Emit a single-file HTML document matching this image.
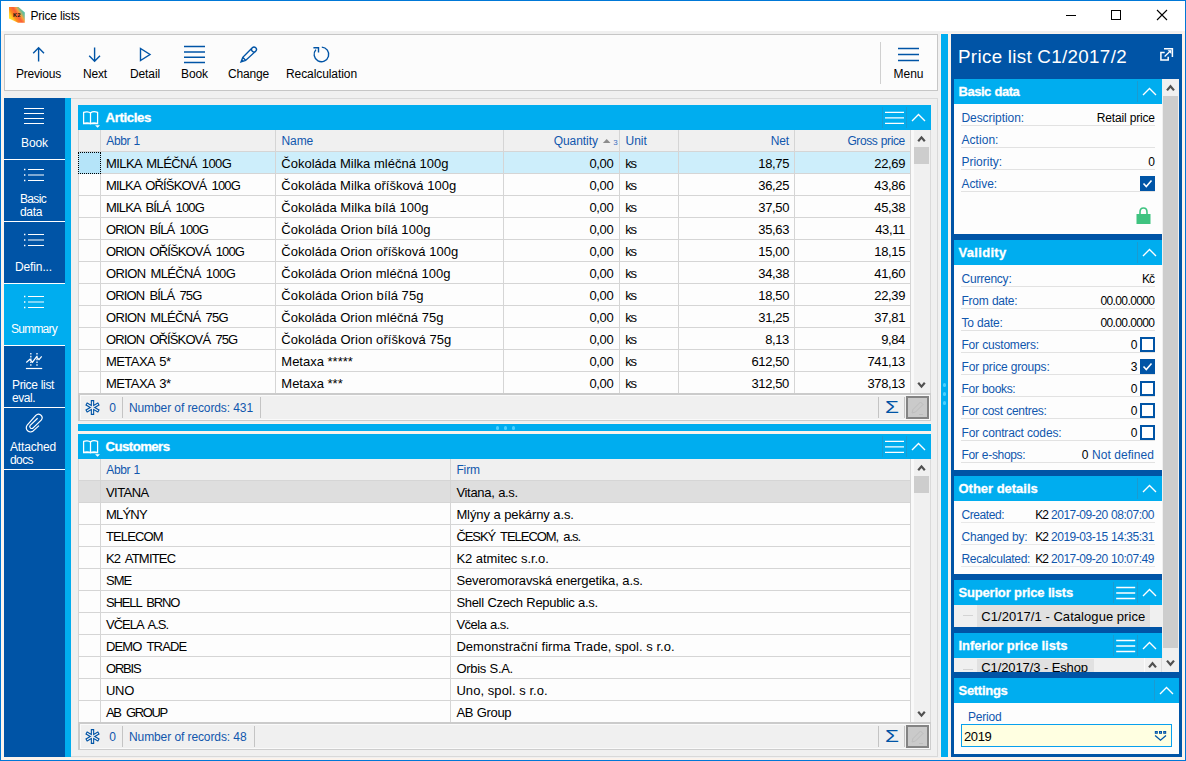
<!DOCTYPE html>
<html lang="en"><head><meta charset="utf-8"><title>Price lists</title>
<style>html,body{margin:0;padding:0}body{width:1186px;height:761px;position:relative;overflow:hidden;font-family:"Liberation Sans",sans-serif;background:#f0f0f0}
.r{position:absolute}.t{position:absolute;white-space:pre}</style></head>
<body>
<div class="r" style="left:0px;top:0px;width:1186px;height:761px;background:#0078d7;"></div>
<div class="r" style="left:1px;top:1px;width:1184px;height:30px;background:#fff;"></div>
<div class="r" style="left:1px;top:31px;width:1184px;height:729px;background:#fcf3ec;"></div>
<div class="r" style="left:4px;top:31px;width:936px;height:726px;background:#f0f0f0;"></div>
<div class="r" style="left:940px;top:31px;width:242px;height:2px;background:#f0f0f0;"></div>
<div class="r" style="left:71px;top:757px;width:869px;height:1px;background:#f0f0f0;"></div>
<svg class="r" style="left:8px;top:6px;" width="18" height="18" viewBox="0 0 18 18"><defs><linearGradient id="ig" gradientUnits="userSpaceOnUse" x1="1" y1="13" x2="17" y2="3"><stop offset="0" stop-color="#ffee2a"/><stop offset="0.16" stop-color="#ffd02a"/><stop offset="0.3" stop-color="#ff8a1c"/><stop offset="0.5" stop-color="#fb5d3a"/><stop offset="0.64" stop-color="#f8a23c"/><stop offset="0.76" stop-color="#7dbb8c"/><stop offset="0.88" stop-color="#4cc0aa"/><stop offset="1" stop-color="#3fa896"/></linearGradient></defs><path d="M1 1 H10.5 L16.8 6.5 V16.8 H10 L1 12.5 Z" fill="url(#ig)"/></svg>
<span class="t" style="left:13px;top:10.96px;font-size:5.6px;line-height:8px;color:#111;font-weight:700;letter-spacing:0.422px;">K2</span>
<span class="t" style="left:30.5px;top:6.84px;font-size:12px;line-height:18px;color:#000;font-weight:400;letter-spacing:-0.234px;word-spacing:0.234px;">Price lists</span>
<svg class="r" style="left:1060px;top:5px;" width="115" height="22" viewBox="0 0 115 22"><path d="M6 10.5H16" stroke="#000" stroke-width="1" fill="none"/><rect x="51.5" y="5.5" width="9" height="9" stroke="#000" fill="none"/><path d="M97 5L107 15M107 5L97 15" stroke="#000" stroke-width="1.1" fill="none"/></svg>
<div class="r" style="left:4px;top:34px;width:934px;height:57px;background:#fcfcfc;border:1px solid #c6c6c6;box-sizing:border-box;"></div>
<svg class="r" style="left:28px;top:44px;" width="22" height="20" viewBox="0 0 22 20"><path d="M10.6 17.5V4M5.2 9.3L10.6 3.8L16 9.3" stroke="#0054a6" stroke-width="1.4" fill="none"/></svg>
<span class="t" style="left:16px;top:64.84px;font-size:12px;line-height:18px;color:#000;font-weight:400;letter-spacing:-0.211px;">Previous</span>
<svg class="r" style="left:84px;top:44px;" width="22" height="20" viewBox="0 0 22 20"><path d="M10.6 3.5V17M5.2 11.7L10.6 17.2L16 11.7" stroke="#0054a6" stroke-width="1.4" fill="none"/></svg>
<span class="t" style="left:83px;top:64.84px;font-size:12px;line-height:18px;color:#000;font-weight:400;letter-spacing:-0.172px;">Next</span>
<svg class="r" style="left:134px;top:44px;" width="22" height="20" viewBox="0 0 22 20"><path d="M6.5 4.5V16.5L16 10.5Z" stroke="#0054a6" stroke-width="1.4" fill="none"/></svg>
<span class="t" style="left:130px;top:64.84px;font-size:12px;line-height:18px;color:#000;font-weight:400;letter-spacing:-0.115px;">Detail</span>
<svg class="r" style="left:182px;top:44px;" width="26" height="20" viewBox="0 0 26 20"><path d="M2 2.6H23M2 7.9H23M2 13.2H23M2 18.5H23" stroke="#0054a6" stroke-width="1.5" fill="none"/></svg>
<span class="t" style="left:181px;top:64.84px;font-size:12px;line-height:18px;color:#000;font-weight:400;letter-spacing:-0.090px;">Book</span>
<svg class="r" style="left:238px;top:44px;" width="22" height="20" viewBox="0 0 22 20"><path d="M3 17.9L4.8 13.3L14.3 3.8A2.4 2.4 0 0 1 17.7 7.2L7.6 16.4Z M4.8 13.3L7.6 16.4 M14.3 3.8A2.4 2.4 0 0 0 17.7 7.2" stroke="#0054a6" stroke-width="1.4" fill="none"/><path d="M3 17.9L4 15.2L5.8 17.1Z" fill="#0054a6"/></svg>
<span class="t" style="left:228px;top:64.84px;font-size:12px;line-height:18px;color:#000;font-weight:400;letter-spacing:-0.174px;">Change</span>
<svg class="r" style="left:310px;top:44px;" width="24" height="20" viewBox="0 0 24 20"><path d="M11.8 3.1A7.3 7.3 0 1 1 5.9 5.6 M3.4 3.7H8.5V8.6" stroke="#0054a6" stroke-width="1.4" fill="none"/></svg>
<span class="t" style="left:286px;top:64.84px;font-size:12px;line-height:18px;color:#000;font-weight:400;letter-spacing:-0.081px;">Recalculation</span>
<div class="r" style="left:880px;top:42px;width:1px;height:42px;background:#d0d0d0;"></div>
<svg class="r" style="left:894px;top:44px;" width="28" height="20" viewBox="0 0 28 20"><path d="M4 4.6H25M4 10.6H25M4 16.5H25" stroke="#0054a6" stroke-width="1.5" fill="none"/></svg>
<span class="t" style="left:893.4px;top:64.84px;font-size:12px;line-height:18px;color:#000;font-weight:400;letter-spacing:0.042px;">Menu</span>
<div class="r" style="left:4px;top:98px;width:61px;height:659px;background:#0054a6;"></div>
<div class="r" style="left:65px;top:98px;width:6px;height:659px;background:#00adef;"></div>
<div class="r" style="left:4px;top:284px;width:67px;height:61px;background:#00adef;"></div>
<div class="r" style="left:4px;top:159px;width:61px;height:1px;background:#fff;"></div>
<div class="r" style="left:4px;top:221px;width:61px;height:1px;background:#fff;"></div>
<div class="r" style="left:4px;top:283px;width:61px;height:1px;background:#fff;"></div>
<div class="r" style="left:4px;top:345px;width:61px;height:1px;background:#fff;"></div>
<div class="r" style="left:4px;top:407px;width:61px;height:1px;background:#fff;"></div>
<div class="r" style="left:4px;top:469px;width:61px;height:1px;background:#fff;"></div>
<svg class="r" style="left:22px;top:105px;" width="26" height="22" viewBox="0 0 26 22"><path d="M2 3.5H22M2 8.5H22M2 13.5H22M2 18.5H22" stroke="#fff" stroke-width="1.2" fill="none"/></svg>
<span class="t" style="left:21px;top:133.84px;font-size:12px;line-height:18px;color:#fff;font-weight:400;letter-spacing:-0.090px;">Book</span>
<svg class="r" style="left:22px;top:167px;" width="26" height="16" viewBox="0 0 26 16"><path d="M6 2.5H22M6 8H22M6 13.5H22" stroke="#fff" stroke-width="1.2" fill="none"/><path d="M2 2.5H3.4M2 8H3.4M2 13.5H3.4" stroke="#fff" stroke-width="1.4"/></svg>
<span class="t" style="left:20px;top:189.84px;font-size:12px;line-height:18px;color:#fff;font-weight:400;letter-spacing:-0.669px;">Basic</span>
<span class="t" style="left:20px;top:202.84px;font-size:12px;line-height:18px;color:#fff;font-weight:400;letter-spacing:-0.340px;">data</span>
<svg class="r" style="left:22px;top:232px;" width="26" height="16" viewBox="0 0 26 16"><path d="M6 2.5H22M6 8H22M6 13.5H22" stroke="#fff" stroke-width="1.2" fill="none"/><path d="M2 2.5H3.4M2 8H3.4M2 13.5H3.4" stroke="#fff" stroke-width="1.4"/></svg>
<span class="t" style="left:15px;top:257.84px;font-size:12px;line-height:18px;color:#fff;font-weight:400;letter-spacing:-0.127px;">Defin...</span>
<svg class="r" style="left:22px;top:294px;" width="26" height="16" viewBox="0 0 26 16"><path d="M6 2.5H22M6 8H22M6 13.5H22" stroke="#fff" stroke-width="1.2" fill="none"/><path d="M2 2.5H3.4M2 8H3.4M2 13.5H3.4" stroke="#fff" stroke-width="1.4"/></svg>
<span class="t" style="left:11px;top:319.84px;font-size:12px;line-height:18px;color:#fff;font-weight:400;letter-spacing:-0.763px;">Summary</span>
<svg class="r" style="left:24px;top:351px;" width="22" height="20" viewBox="0 0 22 20"><path d="M1.9 17.5H18.2" stroke="#fff" stroke-width="1.2" fill="none" stroke-width="1.4"/><path d="M6.8 2V15.6M13 2V15.6" stroke="#cfe0f2" stroke-width="1.6" stroke-dasharray="1.6 1.2" fill="none"/><path d="M2.3 11.5L5.8 8.3L8.5 11.2L12.4 6L15 8.7L17.7 5.3" stroke="#fff" stroke-width="1.2" fill="none" stroke-width="1.3"/></svg>
<span class="t" style="left:12px;top:375.84px;font-size:12px;line-height:18px;color:#fff;font-weight:400;letter-spacing:-0.372px;word-spacing:0.372px;">Price list</span>
<span class="t" style="left:12px;top:388.84px;font-size:12px;line-height:18px;color:#fff;font-weight:400;letter-spacing:-0.472px;">eval.</span>
<svg class="r" style="left:24px;top:412px;" width="22" height="22" viewBox="0 0 22 22"><path d="M15 13.6L9.8 18.4A4.2 4.2 0 0 1 3.2 13.1L11.8 3.4A3.6 3.6 0 0 1 17.4 7.9L9.2 15.8A1.9 1.9 0 0 1 6.2 13.4L13.6 6.2" stroke="#fff" stroke-width="1.2" fill="none" stroke-width="1.3"/></svg>
<span class="t" style="left:10px;top:437.84px;font-size:12px;line-height:18px;color:#fff;font-weight:400;letter-spacing:-0.172px;">Attached</span>
<span class="t" style="left:10px;top:450.84px;font-size:12px;line-height:18px;color:#fff;font-weight:400;letter-spacing:-0.590px;">docs</span>
<div class="r" style="left:71px;top:98px;width:867px;height:659px;background:#f0f0f0;border:1px solid #d9d9d9;border-left:none;box-sizing:border-box;"></div>
<div class="r" style="left:78px;top:105px;width:853px;height:25px;background:#00adef;"></div>
<svg class="r" style="left:82px;top:109px;" width="22" height="20" viewBox="0 0 22 20"><path d="M8.5 4C7 2.7 3.5 2.6 1.6 3.4V14.5C3.5 13.5 7 13.6 8.5 14.9M8.5 4C10 2.7 13.5 2.6 15.6 3.4V14.5C13.5 13.5 10 13.6 8.5 14.9M8.5 4V15.4M1.6 14.5H15.6" stroke="#fff" stroke-width="1.25" fill="none"/><path d="M13.1 16.2H18L15.55 18.7Z" fill="#fff"/></svg>
<span class="t" style="left:105.5px;top:108.33px;font-size:13.2px;line-height:20px;color:#fff;font-weight:700;letter-spacing:-0.374px;-webkit-text-stroke:0.3px #fff;">Articles</span>
<div class="r" style="left:882px;top:107px;width:1px;height:21px;background:#1b9bd1;"></div>
<div class="r" style="left:906px;top:107px;width:1px;height:21px;background:#1b9bd1;"></div>
<svg class="r" style="left:884px;top:109px;" width="22" height="18" viewBox="0 0 22 18"><path d="M1 3.3H20M1 8.8H20M1 14.3H20" stroke="#fff" stroke-width="1.3" fill="none"/></svg>
<svg class="r" style="left:909px;top:109px;" width="20" height="18" viewBox="0 0 20 18"><path d="M3 12L9.5 5.5L16 12" stroke="#fff" stroke-width="1.4" fill="none"/></svg>
<div class="r" style="left:78px;top:130px;width:833px;height:264px;background:#fdfdfd;"></div>
<div class="r" style="left:78px;top:130px;width:833px;height:22px;background:#f0f0f0;"></div>
<div class="r" style="left:78px;top:152px;width:833px;height:22px;background:#cdeefb;"></div>
<div class="r" style="left:78px;top:151px;width:833px;height:1px;background:#d5d5d5;"></div>
<div class="r" style="left:78px;top:173px;width:833px;height:1px;background:#d5d5d5;"></div>
<div class="r" style="left:78px;top:195px;width:833px;height:1px;background:#d5d5d5;"></div>
<div class="r" style="left:78px;top:217px;width:833px;height:1px;background:#d5d5d5;"></div>
<div class="r" style="left:78px;top:239px;width:833px;height:1px;background:#d5d5d5;"></div>
<div class="r" style="left:78px;top:261px;width:833px;height:1px;background:#d5d5d5;"></div>
<div class="r" style="left:78px;top:283px;width:833px;height:1px;background:#d5d5d5;"></div>
<div class="r" style="left:78px;top:305px;width:833px;height:1px;background:#d5d5d5;"></div>
<div class="r" style="left:78px;top:327px;width:833px;height:1px;background:#d5d5d5;"></div>
<div class="r" style="left:78px;top:349px;width:833px;height:1px;background:#d5d5d5;"></div>
<div class="r" style="left:78px;top:371px;width:833px;height:1px;background:#d5d5d5;"></div>
<div class="r" style="left:78px;top:393px;width:833px;height:1px;background:#d5d5d5;"></div>
<div class="r" style="left:78px;top:130px;width:1px;height:264px;background:#d5d5d5;"></div>
<div class="r" style="left:100px;top:130px;width:1px;height:264px;background:#d5d5d5;"></div>
<div class="r" style="left:275px;top:130px;width:1px;height:264px;background:#d5d5d5;"></div>
<div class="r" style="left:503px;top:130px;width:1px;height:264px;background:#d5d5d5;"></div>
<div class="r" style="left:619px;top:130px;width:1px;height:264px;background:#d5d5d5;"></div>
<div class="r" style="left:678px;top:130px;width:1px;height:264px;background:#d5d5d5;"></div>
<div class="r" style="left:794px;top:130px;width:1px;height:264px;background:#d5d5d5;"></div>
<div class="r" style="left:910px;top:130px;width:1px;height:264px;background:#d5d5d5;"></div>
<div class="r" style="left:78px;top:152px;width:23px;height:22px;background:#b5e4f9;border:1px dotted #000;box-sizing:border-box;"></div>
<span class="t" style="left:106.3px;top:131.54px;font-size:12px;line-height:18px;color:#1057ad;font-weight:400;letter-spacing:-0.352px;word-spacing:0.352px;">Abbr 1</span>
<span class="t" style="left:281.5px;top:131.54px;font-size:12px;line-height:18px;color:#1057ad;font-weight:400;letter-spacing:-0.104px;">Name</span>
<span class="t" style="right:588px;margin-right:0.050px;top:131.54px;font-size:12px;line-height:18px;color:#1057ad;font-weight:400;letter-spacing:-0.050px;">Quantity</span>
<span class="t" style="left:625.6px;top:131.54px;font-size:12px;line-height:18px;color:#1057ad;font-weight:400;letter-spacing:-0.036px;">Unit</span>
<span class="t" style="right:397px;margin-right:0.263px;top:131.54px;font-size:12px;line-height:18px;color:#1057ad;font-weight:400;letter-spacing:-0.263px;">Net</span>
<span class="t" style="right:280.79999999999995px;margin-right:0.396px;top:131.54px;font-size:12px;line-height:18px;color:#1057ad;font-weight:400;letter-spacing:-0.396px;word-spacing:0.396px;">Gross price</span>
<svg class="r" style="left:601px;top:136px;" width="20" height="12" viewBox="0 0 20 12"><path d="M1.9 7L5.7 3L9.5 7Z" fill="#8c8c8c"/></svg>
<span class="t" style="left:613.2px;top:136.73px;font-size:8px;line-height:12px;color:#3d6fc0;font-weight:400;">3</span>
<span class="t" style="left:106px;top:153.50px;font-size:13px;line-height:20px;color:#000;font-weight:400;letter-spacing:-0.579px;word-spacing:1.819px;">MILKA MLÉČNÁ 100G</span>
<span class="t" style="left:281.3px;top:153.50px;font-size:13px;line-height:20px;color:#000;font-weight:400;letter-spacing:0.011px;word-spacing:-0.011px;">Čokoláda Milka mléčná 100g</span>
<span class="t" style="right:572.7px;top:153.50px;font-size:13px;line-height:20px;color:#000;font-weight:400;letter-spacing:-0.36px;">0,00</span>
<span class="t" style="left:625.2px;top:153.50px;font-size:13px;line-height:20px;color:#000;font-weight:400;letter-spacing:-1.150px;">ks</span>
<span class="t" style="right:397px;top:153.50px;font-size:13px;line-height:20px;color:#000;font-weight:400;letter-spacing:-0.36px;">18,75</span>
<span class="t" style="right:281px;top:153.50px;font-size:13px;line-height:20px;color:#000;font-weight:400;letter-spacing:-0.36px;">22,69</span>
<span class="t" style="left:106px;top:175.50px;font-size:13px;line-height:20px;color:#000;font-weight:400;letter-spacing:-0.849px;word-spacing:2.449px;">MILKA OŘÍŠKOVÁ 100G</span>
<span class="t" style="left:281.3px;top:175.50px;font-size:13px;line-height:20px;color:#000;font-weight:400;letter-spacing:0.034px;word-spacing:-0.034px;">Čokoláda Milka oříšková 100g</span>
<span class="t" style="right:572.7px;top:175.50px;font-size:13px;line-height:20px;color:#000;font-weight:400;letter-spacing:-0.36px;">0,00</span>
<span class="t" style="left:625.2px;top:175.50px;font-size:13px;line-height:20px;color:#000;font-weight:400;letter-spacing:-1.150px;">ks</span>
<span class="t" style="right:397px;top:175.50px;font-size:13px;line-height:20px;color:#000;font-weight:400;letter-spacing:-0.36px;">36,25</span>
<span class="t" style="right:281px;top:175.50px;font-size:13px;line-height:20px;color:#000;font-weight:400;letter-spacing:-0.36px;">43,86</span>
<span class="t" style="left:106px;top:197.50px;font-size:13px;line-height:20px;color:#000;font-weight:400;letter-spacing:-0.824px;word-spacing:2.424px;">MILKA BÍLÁ 100G</span>
<span class="t" style="left:281.3px;top:197.50px;font-size:13px;line-height:20px;color:#000;font-weight:400;letter-spacing:0.063px;word-spacing:-0.063px;">Čokoláda Milka bílá 100g</span>
<span class="t" style="right:572.7px;top:197.50px;font-size:13px;line-height:20px;color:#000;font-weight:400;letter-spacing:-0.36px;">0,00</span>
<span class="t" style="left:625.2px;top:197.50px;font-size:13px;line-height:20px;color:#000;font-weight:400;letter-spacing:-1.150px;">ks</span>
<span class="t" style="right:397px;top:197.50px;font-size:13px;line-height:20px;color:#000;font-weight:400;letter-spacing:-0.36px;">37,50</span>
<span class="t" style="right:281px;top:197.50px;font-size:13px;line-height:20px;color:#000;font-weight:400;letter-spacing:-0.36px;">45,38</span>
<span class="t" style="left:106px;top:219.50px;font-size:13px;line-height:20px;color:#000;font-weight:400;letter-spacing:-0.848px;word-spacing:2.448px;">ORION BÍLÁ 100G</span>
<span class="t" style="left:281.3px;top:219.50px;font-size:13px;line-height:20px;color:#000;font-weight:400;letter-spacing:0.089px;word-spacing:-0.089px;">Čokoláda Orion bílá 100g</span>
<span class="t" style="right:572.7px;top:219.50px;font-size:13px;line-height:20px;color:#000;font-weight:400;letter-spacing:-0.36px;">0,00</span>
<span class="t" style="left:625.2px;top:219.50px;font-size:13px;line-height:20px;color:#000;font-weight:400;letter-spacing:-1.150px;">ks</span>
<span class="t" style="right:397px;top:219.50px;font-size:13px;line-height:20px;color:#000;font-weight:400;letter-spacing:-0.36px;">35,63</span>
<span class="t" style="right:281px;top:219.50px;font-size:13px;line-height:20px;color:#000;font-weight:400;letter-spacing:-0.36px;">43,11</span>
<span class="t" style="left:106px;top:241.50px;font-size:13px;line-height:20px;color:#000;font-weight:400;letter-spacing:-0.867px;word-spacing:2.467px;">ORION OŘÍŠKOVÁ 100G</span>
<span class="t" style="left:281.3px;top:241.50px;font-size:13px;line-height:20px;color:#000;font-weight:400;letter-spacing:0.056px;word-spacing:-0.056px;">Čokoláda Orion oříšková 100g</span>
<span class="t" style="right:572.7px;top:241.50px;font-size:13px;line-height:20px;color:#000;font-weight:400;letter-spacing:-0.36px;">0,00</span>
<span class="t" style="left:625.2px;top:241.50px;font-size:13px;line-height:20px;color:#000;font-weight:400;letter-spacing:-1.150px;">ks</span>
<span class="t" style="right:397px;top:241.50px;font-size:13px;line-height:20px;color:#000;font-weight:400;letter-spacing:-0.36px;">15,00</span>
<span class="t" style="right:281px;top:241.50px;font-size:13px;line-height:20px;color:#000;font-weight:400;letter-spacing:-0.36px;">18,15</span>
<span class="t" style="left:106px;top:263.50px;font-size:13px;line-height:20px;color:#000;font-weight:400;letter-spacing:-0.619px;word-spacing:1.944px;">ORION MLÉČNÁ 100G</span>
<span class="t" style="left:281.3px;top:263.50px;font-size:13px;line-height:20px;color:#000;font-weight:400;letter-spacing:0.035px;word-spacing:-0.035px;">Čokoláda Orion mléčná 100g</span>
<span class="t" style="right:572.7px;top:263.50px;font-size:13px;line-height:20px;color:#000;font-weight:400;letter-spacing:-0.36px;">0,00</span>
<span class="t" style="left:625.2px;top:263.50px;font-size:13px;line-height:20px;color:#000;font-weight:400;letter-spacing:-1.150px;">ks</span>
<span class="t" style="right:397px;top:263.50px;font-size:13px;line-height:20px;color:#000;font-weight:400;letter-spacing:-0.36px;">34,38</span>
<span class="t" style="right:281px;top:263.50px;font-size:13px;line-height:20px;color:#000;font-weight:400;letter-spacing:-0.36px;">41,60</span>
<span class="t" style="left:106px;top:285.50px;font-size:13px;line-height:20px;color:#000;font-weight:400;letter-spacing:-0.866px;word-spacing:2.466px;">ORION BÍLÁ 75G</span>
<span class="t" style="left:281.3px;top:285.50px;font-size:13px;line-height:20px;color:#000;font-weight:400;letter-spacing:0.105px;word-spacing:-0.105px;">Čokoláda Orion bílá 75g</span>
<span class="t" style="right:572.7px;top:285.50px;font-size:13px;line-height:20px;color:#000;font-weight:400;letter-spacing:-0.36px;">0,00</span>
<span class="t" style="left:625.2px;top:285.50px;font-size:13px;line-height:20px;color:#000;font-weight:400;letter-spacing:-1.150px;">ks</span>
<span class="t" style="right:397px;top:285.50px;font-size:13px;line-height:20px;color:#000;font-weight:400;letter-spacing:-0.36px;">18,50</span>
<span class="t" style="right:281px;top:285.50px;font-size:13px;line-height:20px;color:#000;font-weight:400;letter-spacing:-0.36px;">22,39</span>
<span class="t" style="left:106px;top:307.50px;font-size:13px;line-height:20px;color:#000;font-weight:400;letter-spacing:-0.673px;word-spacing:2.086px;">ORION MLÉČNÁ 75G</span>
<span class="t" style="left:281.3px;top:307.50px;font-size:13px;line-height:20px;color:#000;font-weight:400;letter-spacing:0.047px;word-spacing:-0.047px;">Čokoláda Orion mléčná 75g</span>
<span class="t" style="right:572.7px;top:307.50px;font-size:13px;line-height:20px;color:#000;font-weight:400;letter-spacing:-0.36px;">0,00</span>
<span class="t" style="left:625.2px;top:307.50px;font-size:13px;line-height:20px;color:#000;font-weight:400;letter-spacing:-1.150px;">ks</span>
<span class="t" style="right:397px;top:307.50px;font-size:13px;line-height:20px;color:#000;font-weight:400;letter-spacing:-0.36px;">31,25</span>
<span class="t" style="right:281px;top:307.50px;font-size:13px;line-height:20px;color:#000;font-weight:400;letter-spacing:-0.36px;">37,81</span>
<span class="t" style="left:106px;top:329.50px;font-size:13px;line-height:20px;color:#000;font-weight:400;letter-spacing:-0.889px;word-spacing:2.489px;">ORION OŘÍŠKOVÁ 75G</span>
<span class="t" style="left:281.3px;top:329.50px;font-size:13px;line-height:20px;color:#000;font-weight:400;letter-spacing:0.068px;word-spacing:-0.068px;">Čokoláda Orion oříšková 75g</span>
<span class="t" style="right:572.7px;top:329.50px;font-size:13px;line-height:20px;color:#000;font-weight:400;letter-spacing:-0.36px;">0,00</span>
<span class="t" style="left:625.2px;top:329.50px;font-size:13px;line-height:20px;color:#000;font-weight:400;letter-spacing:-1.150px;">ks</span>
<span class="t" style="right:397px;top:329.50px;font-size:13px;line-height:20px;color:#000;font-weight:400;letter-spacing:-0.36px;">8,13</span>
<span class="t" style="right:281px;top:329.50px;font-size:13px;line-height:20px;color:#000;font-weight:400;letter-spacing:-0.36px;">9,84</span>
<span class="t" style="left:106px;top:351.50px;font-size:13px;line-height:20px;color:#000;font-weight:400;letter-spacing:-0.565px;word-spacing:1.798px;">METAXA 5*</span>
<span class="t" style="left:281.3px;top:351.50px;font-size:13px;line-height:20px;color:#000;font-weight:400;">Metaxa *****</span>
<span class="t" style="right:572.7px;top:351.50px;font-size:13px;line-height:20px;color:#000;font-weight:400;letter-spacing:-0.36px;">0,00</span>
<span class="t" style="left:625.2px;top:351.50px;font-size:13px;line-height:20px;color:#000;font-weight:400;letter-spacing:-1.150px;">ks</span>
<span class="t" style="right:397px;top:351.50px;font-size:13px;line-height:20px;color:#000;font-weight:400;letter-spacing:-0.36px;">612,50</span>
<span class="t" style="right:281px;top:351.50px;font-size:13px;line-height:20px;color:#000;font-weight:400;letter-spacing:-0.36px;">741,13</span>
<span class="t" style="left:106px;top:373.50px;font-size:13px;line-height:20px;color:#000;font-weight:400;letter-spacing:-0.565px;word-spacing:1.798px;">METAXA 3*</span>
<span class="t" style="left:281.3px;top:373.50px;font-size:13px;line-height:20px;color:#000;font-weight:400;">Metaxa ***</span>
<span class="t" style="right:572.7px;top:373.50px;font-size:13px;line-height:20px;color:#000;font-weight:400;letter-spacing:-0.36px;">0,00</span>
<span class="t" style="left:625.2px;top:373.50px;font-size:13px;line-height:20px;color:#000;font-weight:400;letter-spacing:-1.150px;">ks</span>
<span class="t" style="right:397px;top:373.50px;font-size:13px;line-height:20px;color:#000;font-weight:400;letter-spacing:-0.36px;">312,50</span>
<span class="t" style="right:281px;top:373.50px;font-size:13px;line-height:20px;color:#000;font-weight:400;letter-spacing:-0.36px;">378,13</span>
<div class="r" style="left:911px;top:130px;width:20px;height:264px;background:#f0f0f0;"></div>
<div class="r" style="left:911px;top:130px;width:3px;height:264px;background:#f9f9f9;"></div>
<div class="r" style="left:930px;top:130px;width:1px;height:264px;background:#dadada;"></div>
<svg class="r" style="left:911px;top:130px;" width="20" height="17" viewBox="0 0 20 17"><path d="M7.2 11.2L10.5 7.4L13.8 11.2" stroke="#505050" stroke-width="2.2" fill="none"/></svg>
<svg class="r" style="left:911px;top:377px;" width="20" height="17" viewBox="0 0 20 17"><path d="M7.2 5.8L10.5 9.6L13.8 5.8" stroke="#505050" stroke-width="2.2" fill="none"/></svg>
<div class="r" style="left:914px;top:147px;width:15px;height:17px;background:#cdcdcd;"></div>
<div class="r" style="left:78px;top:393px;width:853px;height:28px;background:#f0f0f0;border:1px solid #cdcdcd;box-sizing:border-box;border-top:2px solid #cbcbcb;border-left:2px solid #cbcbcb;box-shadow:inset 1px 1px 0 #fafafa, inset -1px -1px 0 #fafafa;"></div>
<svg class="r" style="left:84px;top:399px;" width="18" height="18" viewBox="0 0 18 18"><g stroke="#0054a6" stroke-width="3.4" fill="none"><path d="M8.5 1.1V15.9M2.1 4.8L14.9 12.2M2.1 12.2L14.9 4.8"/></g><g stroke="#f0f0f0" stroke-width="1.2" fill="none"><path d="M8.5 2.2V14.8M3.04 5.35L13.96 11.65M3.04 11.65L13.96 5.35"/></g></svg>
<span class="t" style="left:109.3px;top:398.84px;font-size:12px;line-height:18px;color:#1057ad;font-weight:400;">0</span>
<div class="r" style="left:122px;top:397px;width:1px;height:21px;background:#c4c4c4;"></div>
<span class="t" style="left:129px;top:398.84px;font-size:12px;line-height:18px;color:#1057ad;font-weight:400;letter-spacing:-0.109px;word-spacing:0.109px;">Number of records: 431</span>
<div class="r" style="left:260px;top:397px;width:1px;height:21px;background:#c4c4c4;"></div>
<div class="r" style="left:878px;top:397px;width:1px;height:21px;background:#c4c4c4;"></div>
<div class="r" style="left:904px;top:397px;width:1px;height:21px;background:#c4c4c4;"></div>
<span class="t" style="left:885px;top:395.11px;font-size:17px;line-height:26px;color:#0054a6;font-weight:400;transform:scaleX(1.33);transform-origin:0 50%;">Σ</span>
<div class="r" style="left:906px;top:396px;width:23px;height:23px;background:#cacaca;border:2px solid #838383;box-sizing:border-box;"></div>
<svg class="r" style="left:909px;top:399px;" width="18" height="18" viewBox="0 0 18 18"><path d="M3 14L4 10.5L11.5 3L14 5.5L6.5 13Z M10 15.5H14" stroke="#bdbdbd" stroke-width="1" fill="none"/></svg>
<div class="r" style="left:78px;top:423px;width:853px;height:11px;background:#fcf3ec;"></div>
<div class="r" style="left:78px;top:424px;width:853px;height:7px;background:#00adef;"></div>
<div class="r" style="left:495.9px;top:426.2px;width:3.6px;height:3.6px;background:#4dd0ff;border-radius:50%;"></div>
<div class="r" style="left:503.9px;top:426.2px;width:3.6px;height:3.6px;background:#4dd0ff;border-radius:50%;"></div>
<div class="r" style="left:511.90000000000003px;top:426.2px;width:3.6px;height:3.6px;background:#4dd0ff;border-radius:50%;"></div>
<div class="r" style="left:78px;top:434px;width:853px;height:25px;background:#00adef;"></div>
<svg class="r" style="left:82px;top:438px;" width="22" height="20" viewBox="0 0 22 20"><path d="M8.5 4C7 2.7 3.5 2.6 1.6 3.4V14.5C3.5 13.5 7 13.6 8.5 14.9M8.5 4C10 2.7 13.5 2.6 15.6 3.4V14.5C13.5 13.5 10 13.6 8.5 14.9M8.5 4V15.4M1.6 14.5H15.6" stroke="#fff" stroke-width="1.25" fill="none"/><path d="M13.1 16.2H18L15.55 18.7Z" fill="#fff"/></svg>
<span class="t" style="left:105.5px;top:437.33px;font-size:13.2px;line-height:20px;color:#fff;font-weight:700;letter-spacing:-0.543px;-webkit-text-stroke:0.3px #fff;">Customers</span>
<div class="r" style="left:882px;top:436px;width:1px;height:21px;background:#1b9bd1;"></div>
<div class="r" style="left:906px;top:436px;width:1px;height:21px;background:#1b9bd1;"></div>
<svg class="r" style="left:884px;top:438px;" width="22" height="18" viewBox="0 0 22 18"><path d="M1 3.3H20M1 8.8H20M1 14.3H20" stroke="#fff" stroke-width="1.3" fill="none"/></svg>
<svg class="r" style="left:909px;top:438px;" width="20" height="18" viewBox="0 0 20 18"><path d="M3 12L9.5 5.5L16 12" stroke="#fff" stroke-width="1.4" fill="none"/></svg>
<div class="r" style="left:78px;top:459px;width:833px;height:264px;background:#fdfdfd;"></div>
<div class="r" style="left:78px;top:459px;width:833px;height:22px;background:#f0f0f0;"></div>
<div class="r" style="left:78px;top:481px;width:833px;height:22px;background:#dedede;"></div>
<div class="r" style="left:78px;top:480px;width:833px;height:1px;background:#d5d5d5;"></div>
<div class="r" style="left:78px;top:502px;width:833px;height:1px;background:#d5d5d5;"></div>
<div class="r" style="left:78px;top:524px;width:833px;height:1px;background:#d5d5d5;"></div>
<div class="r" style="left:78px;top:546px;width:833px;height:1px;background:#d5d5d5;"></div>
<div class="r" style="left:78px;top:568px;width:833px;height:1px;background:#d5d5d5;"></div>
<div class="r" style="left:78px;top:590px;width:833px;height:1px;background:#d5d5d5;"></div>
<div class="r" style="left:78px;top:612px;width:833px;height:1px;background:#d5d5d5;"></div>
<div class="r" style="left:78px;top:634px;width:833px;height:1px;background:#d5d5d5;"></div>
<div class="r" style="left:78px;top:656px;width:833px;height:1px;background:#d5d5d5;"></div>
<div class="r" style="left:78px;top:678px;width:833px;height:1px;background:#d5d5d5;"></div>
<div class="r" style="left:78px;top:700px;width:833px;height:1px;background:#d5d5d5;"></div>
<div class="r" style="left:78px;top:722px;width:833px;height:1px;background:#d5d5d5;"></div>
<div class="r" style="left:78px;top:459px;width:1px;height:264px;background:#d5d5d5;"></div>
<div class="r" style="left:100px;top:459px;width:1px;height:264px;background:#d5d5d5;"></div>
<div class="r" style="left:450px;top:459px;width:1px;height:264px;background:#d5d5d5;"></div>
<div class="r" style="left:910px;top:459px;width:1px;height:264px;background:#d5d5d5;"></div>
<span class="t" style="left:106.3px;top:460.54px;font-size:12px;line-height:18px;color:#1057ad;font-weight:400;letter-spacing:-0.352px;word-spacing:0.352px;">Abbr 1</span>
<span class="t" style="left:456.4px;top:460.54px;font-size:12px;line-height:18px;color:#1057ad;font-weight:400;letter-spacing:-0.125px;">Firm</span>
<span class="t" style="left:106px;top:482.50px;font-size:13px;line-height:20px;color:#000;font-weight:400;letter-spacing:-0.550px;">VITANA</span>
<span class="t" style="left:456.4px;top:482.50px;font-size:13px;line-height:20px;color:#000;font-weight:400;letter-spacing:-0.301px;word-spacing:0.301px;">Vitana, a.s.</span>
<span class="t" style="left:106px;top:504.50px;font-size:13px;line-height:20px;color:#000;font-weight:400;letter-spacing:-0.799px;">MLÝNY</span>
<span class="t" style="left:456.4px;top:504.50px;font-size:13px;line-height:20px;color:#000;font-weight:400;letter-spacing:-0.107px;word-spacing:0.107px;">Mlýny a pekárny a.s.</span>
<span class="t" style="left:106px;top:526.50px;font-size:13px;line-height:20px;color:#000;font-weight:400;letter-spacing:-0.892px;">TELECOM</span>
<span class="t" style="left:456.4px;top:526.50px;font-size:13px;line-height:20px;color:#000;font-weight:400;letter-spacing:-1.063px;word-spacing:2.663px;">ČESKÝ TELECOM, a.s.</span>
<span class="t" style="left:106px;top:548.50px;font-size:13px;line-height:20px;color:#000;font-weight:400;letter-spacing:-0.799px;word-spacing:2.399px;">K2 ATMITEC</span>
<span class="t" style="left:456.4px;top:548.50px;font-size:13px;line-height:20px;color:#000;font-weight:400;letter-spacing:-0.054px;word-spacing:0.054px;">K2 atmitec s.r.o.</span>
<span class="t" style="left:106px;top:570.50px;font-size:13px;line-height:20px;color:#000;font-weight:400;letter-spacing:-0.957px;">SME</span>
<span class="t" style="left:456.4px;top:570.50px;font-size:13px;line-height:20px;color:#000;font-weight:400;letter-spacing:-0.126px;word-spacing:0.126px;">Severomoravská energetika, a.s.</span>
<span class="t" style="left:106px;top:592.50px;font-size:13px;line-height:20px;color:#000;font-weight:400;letter-spacing:-1.143px;word-spacing:2.743px;">SHELL BRNO</span>
<span class="t" style="left:456.4px;top:592.50px;font-size:13px;line-height:20px;color:#000;font-weight:400;letter-spacing:-0.306px;word-spacing:0.306px;">Shell Czech Republic a.s.</span>
<span class="t" style="left:106px;top:614.50px;font-size:13px;line-height:20px;color:#000;font-weight:400;letter-spacing:-0.986px;word-spacing:2.586px;">VČELA A.S.</span>
<span class="t" style="left:456.4px;top:614.50px;font-size:13px;line-height:20px;color:#000;font-weight:400;letter-spacing:-0.499px;word-spacing:0.499px;">Včela a.s.</span>
<span class="t" style="left:106px;top:636.50px;font-size:13px;line-height:20px;color:#000;font-weight:400;letter-spacing:-0.860px;word-spacing:2.460px;">DEMO TRADE</span>
<span class="t" style="left:456.4px;top:636.50px;font-size:13px;line-height:20px;color:#000;font-weight:400;letter-spacing:0.047px;word-spacing:-0.047px;">Demonstrační firma Trade, spol. s r.o.</span>
<span class="t" style="left:106px;top:658.50px;font-size:13px;line-height:20px;color:#000;font-weight:400;letter-spacing:-1.214px;">ORBIS</span>
<span class="t" style="left:456.4px;top:658.50px;font-size:13px;line-height:20px;color:#000;font-weight:400;letter-spacing:-0.306px;word-spacing:0.306px;">Orbis S.A.</span>
<span class="t" style="left:106px;top:680.50px;font-size:13px;line-height:20px;color:#000;font-weight:400;letter-spacing:-0.264px;">UNO</span>
<span class="t" style="left:456.4px;top:680.50px;font-size:13px;line-height:20px;color:#000;font-weight:400;letter-spacing:0.077px;word-spacing:-0.077px;">Uno, spol. s r.o.</span>
<span class="t" style="left:106px;top:702.50px;font-size:13px;line-height:20px;color:#000;font-weight:400;letter-spacing:-1.332px;word-spacing:2.932px;">AB GROUP</span>
<span class="t" style="left:456.4px;top:702.50px;font-size:13px;line-height:20px;color:#000;font-weight:400;letter-spacing:-0.313px;word-spacing:0.313px;">AB Group</span>
<div class="r" style="left:911px;top:459px;width:20px;height:264px;background:#f0f0f0;"></div>
<div class="r" style="left:911px;top:459px;width:3px;height:264px;background:#f9f9f9;"></div>
<div class="r" style="left:930px;top:459px;width:1px;height:264px;background:#dadada;"></div>
<svg class="r" style="left:911px;top:459px;" width="20" height="17" viewBox="0 0 20 17"><path d="M7.2 11.2L10.5 7.4L13.8 11.2" stroke="#505050" stroke-width="2.2" fill="none"/></svg>
<svg class="r" style="left:911px;top:706px;" width="20" height="17" viewBox="0 0 20 17"><path d="M7.2 5.8L10.5 9.6L13.8 5.8" stroke="#505050" stroke-width="2.2" fill="none"/></svg>
<div class="r" style="left:914px;top:476px;width:15px;height:17px;background:#cdcdcd;"></div>
<div class="r" style="left:78px;top:722px;width:853px;height:28px;background:#f0f0f0;border:1px solid #cdcdcd;box-sizing:border-box;border-top:2px solid #cbcbcb;border-left:2px solid #cbcbcb;box-shadow:inset 1px 1px 0 #fafafa, inset -1px -1px 0 #fafafa;"></div>
<svg class="r" style="left:84px;top:728px;" width="18" height="18" viewBox="0 0 18 18"><g stroke="#0054a6" stroke-width="3.4" fill="none"><path d="M8.5 1.1V15.9M2.1 4.8L14.9 12.2M2.1 12.2L14.9 4.8"/></g><g stroke="#f0f0f0" stroke-width="1.2" fill="none"><path d="M8.5 2.2V14.8M3.04 5.35L13.96 11.65M3.04 11.65L13.96 5.35"/></g></svg>
<span class="t" style="left:109.3px;top:727.84px;font-size:12px;line-height:18px;color:#1057ad;font-weight:400;">0</span>
<div class="r" style="left:122px;top:726px;width:1px;height:21px;background:#c4c4c4;"></div>
<span class="t" style="left:129px;top:727.84px;font-size:12px;line-height:18px;color:#1057ad;font-weight:400;letter-spacing:-0.105px;word-spacing:0.105px;">Number of records: 48</span>
<div class="r" style="left:254px;top:726px;width:1px;height:21px;background:#c4c4c4;"></div>
<div class="r" style="left:878px;top:726px;width:1px;height:21px;background:#c4c4c4;"></div>
<div class="r" style="left:904px;top:726px;width:1px;height:21px;background:#c4c4c4;"></div>
<span class="t" style="left:885px;top:724.11px;font-size:17px;line-height:26px;color:#0054a6;font-weight:400;transform:scaleX(1.33);transform-origin:0 50%;">Σ</span>
<div class="r" style="left:906px;top:725px;width:23px;height:23px;background:#cacaca;border:2px solid #838383;box-sizing:border-box;"></div>
<svg class="r" style="left:909px;top:728px;" width="18" height="18" viewBox="0 0 18 18"><path d="M3 14L4 10.5L11.5 3L14 5.5L6.5 13Z M10 15.5H14" stroke="#bdbdbd" stroke-width="1" fill="none"/></svg>
<div class="r" style="left:941px;top:34px;width:7px;height:723px;background:#00adef;"></div>
<div class="r" style="left:942.8px;top:383.2px;width:3.6px;height:3.6px;background:#4dd0ff;border-radius:50%;"></div>
<div class="r" style="left:942.8px;top:392.2px;width:3.6px;height:3.6px;background:#4dd0ff;border-radius:50%;"></div>
<div class="r" style="left:942.8px;top:401.2px;width:3.6px;height:3.6px;background:#4dd0ff;border-radius:50%;"></div>
<div class="r" style="left:951px;top:34px;width:231px;height:723px;background:#0054a6;"></div>
<span class="t" style="left:958px;top:43.49px;font-size:18.8px;line-height:28px;color:#fff;font-weight:400;letter-spacing:0.341px;word-spacing:-0.341px;">Price list C1/2017/2</span>
<svg class="r" style="left:1157px;top:46px;" width="18" height="18" viewBox="0 0 18 18"><path d="M7.7 6.6H3.9V14H11.2V10.8 M7 2.7H15.4V11" stroke="#fff" stroke-width="1.5" fill="none"/><path d="M7.6 10.4L13.6 4.8" stroke="#fff" stroke-width="1.3" fill="none"/><path d="M10.6 4.2H14.3V7.9Z" fill="#fff"/></svg>
<div class="r" style="left:954px;top:79px;width:208px;height:25px;background:#00adef;"></div>
<span class="t" style="left:958.5px;top:82.30px;font-size:13px;line-height:20px;color:#fff;font-weight:700;letter-spacing:-0.472px;word-spacing:0.472px;-webkit-text-stroke:0.3px #fff;">Basic data</span>
<div class="r" style="left:1137px;top:81px;width:1px;height:21px;background:#1b9bd1;"></div>
<svg class="r" style="left:1140px;top:83px;" width="20" height="18" viewBox="0 0 20 18"><path d="M3 12L9.5 5.5L16 12" stroke="#fff" stroke-width="1.4" fill="none"/></svg>
<div class="r" style="left:954px;top:104px;width:208px;height:130px;background:#fdfdfd;"></div>
<span class="t" style="left:961.5px;top:108.84px;font-size:12px;line-height:18px;color:#1057ad;font-weight:400;letter-spacing:-0.072px;">Description:</span>
<div class="r" style="left:961px;top:125px;width:194px;height:1px;background:#e2e2e2;"></div>
<span class="t" style="right:31px;margin-right:0.185px;top:108.84px;font-size:12px;line-height:18px;color:#000;font-weight:400;letter-spacing:-0.185px;word-spacing:0.185px;">Retail price</span>
<span class="t" style="left:961.5px;top:130.84px;font-size:12px;line-height:18px;color:#1057ad;font-weight:400;letter-spacing:0.045px;">Action:</span>
<div class="r" style="left:961px;top:147px;width:194px;height:1px;background:#e2e2e2;"></div>
<span class="t" style="left:961.5px;top:152.84px;font-size:12px;line-height:18px;color:#1057ad;font-weight:400;letter-spacing:-0.019px;">Priority:</span>
<div class="r" style="left:961px;top:169px;width:194px;height:1px;background:#e2e2e2;"></div>
<span class="t" style="right:31px;top:152.84px;font-size:12px;line-height:18px;color:#000;font-weight:400;">0</span>
<span class="t" style="left:961.5px;top:174.84px;font-size:12px;line-height:18px;color:#1057ad;font-weight:400;letter-spacing:-0.074px;">Active:</span>
<div class="r" style="left:961px;top:191px;width:194px;height:1px;background:#e2e2e2;"></div>
<div class="r" style="left:1140px;top:176px;width:15px;height:15px;background:#0054a6;"></div>
<svg class="r" style="left:1140px;top:176px;" width="15" height="15" viewBox="0 0 15 15"><path d="M3.5 7.5L6.3 10.5L11.5 4.5" stroke="#fff" stroke-width="1.6" fill="none"/></svg>
<svg class="r" style="left:1135px;top:206px;" width="18" height="19" viewBox="0 0 18 19"><path d="M5 8V6.2C5 3.8 6.5 2 8.5 2C10.5 2 12 3.8 12 6.2V8" stroke="#3fc380" stroke-width="1.6" fill="none"/><rect x="1.5" y="8" width="14" height="10" fill="#3fc380"/></svg>
<div class="r" style="left:954px;top:240px;width:208px;height:25px;background:#00adef;"></div>
<span class="t" style="left:958.5px;top:243.30px;font-size:13px;line-height:20px;color:#fff;font-weight:700;letter-spacing:0.309px;-webkit-text-stroke:0.3px #fff;">Validity</span>
<div class="r" style="left:1137px;top:242px;width:1px;height:21px;background:#1b9bd1;"></div>
<svg class="r" style="left:1140px;top:244px;" width="20" height="18" viewBox="0 0 20 18"><path d="M3 12L9.5 5.5L16 12" stroke="#fff" stroke-width="1.4" fill="none"/></svg>
<div class="r" style="left:954px;top:265px;width:208px;height:205px;background:#fdfdfd;"></div>
<span class="t" style="left:961.5px;top:269.84px;font-size:12px;line-height:18px;color:#1057ad;font-weight:400;letter-spacing:-0.224px;">Currency:</span>
<div class="r" style="left:961px;top:286px;width:194px;height:1px;background:#e2e2e2;"></div>
<span class="t" style="right:31px;margin-right:0.908px;top:269.84px;font-size:12px;line-height:18px;color:#000;font-weight:400;letter-spacing:-0.908px;">Kč</span>
<span class="t" style="left:961.5px;top:291.84px;font-size:12px;line-height:18px;color:#1057ad;font-weight:400;letter-spacing:-0.237px;word-spacing:0.237px;">From date:</span>
<div class="r" style="left:961px;top:308px;width:194px;height:1px;background:#e2e2e2;"></div>
<span class="t" style="right:31px;margin-right:0.606px;top:291.84px;font-size:12px;line-height:18px;color:#000;font-weight:400;letter-spacing:-0.606px;">00.00.0000</span>
<span class="t" style="left:961.5px;top:313.84px;font-size:12px;line-height:18px;color:#1057ad;font-weight:400;letter-spacing:-0.229px;word-spacing:0.229px;">To date:</span>
<div class="r" style="left:961px;top:330px;width:194px;height:1px;background:#e2e2e2;"></div>
<span class="t" style="right:31px;margin-right:0.606px;top:313.84px;font-size:12px;line-height:18px;color:#000;font-weight:400;letter-spacing:-0.606px;">00.00.0000</span>
<span class="t" style="left:961.5px;top:335.84px;font-size:12px;line-height:18px;color:#1057ad;font-weight:400;letter-spacing:-0.209px;word-spacing:0.209px;">For customers:</span>
<div class="r" style="left:961px;top:352px;width:194px;height:1px;background:#e2e2e2;"></div>
<div class="r" style="left:1140px;top:337px;width:15px;height:15px;background:#fff;border:2px solid #0054a6;box-sizing:border-box;"></div>
<span class="t" style="right:48.5px;top:335.84px;font-size:12px;line-height:18px;color:#000;font-weight:400;">0</span>
<span class="t" style="left:961.5px;top:357.84px;font-size:12px;line-height:18px;color:#1057ad;font-weight:400;letter-spacing:-0.174px;word-spacing:0.174px;">For price groups:</span>
<div class="r" style="left:961px;top:374px;width:194px;height:1px;background:#e2e2e2;"></div>
<div class="r" style="left:1140px;top:359px;width:15px;height:15px;background:#0054a6;"></div>
<svg class="r" style="left:1140px;top:359px;" width="15" height="15" viewBox="0 0 15 15"><path d="M3.5 7.5L6.3 10.5L11.5 4.5" stroke="#fff" stroke-width="1.6" fill="none"/></svg>
<span class="t" style="right:48.5px;top:357.84px;font-size:12px;line-height:18px;color:#000;font-weight:400;">3</span>
<span class="t" style="left:961.5px;top:379.84px;font-size:12px;line-height:18px;color:#1057ad;font-weight:400;letter-spacing:-0.311px;word-spacing:0.311px;">For books:</span>
<div class="r" style="left:961px;top:396px;width:194px;height:1px;background:#e2e2e2;"></div>
<div class="r" style="left:1140px;top:381px;width:15px;height:15px;background:#fff;border:2px solid #0054a6;box-sizing:border-box;"></div>
<span class="t" style="right:48.5px;top:379.84px;font-size:12px;line-height:18px;color:#000;font-weight:400;">0</span>
<span class="t" style="left:961.5px;top:401.84px;font-size:12px;line-height:18px;color:#1057ad;font-weight:400;letter-spacing:-0.285px;word-spacing:0.285px;">For cost centres:</span>
<div class="r" style="left:961px;top:418px;width:194px;height:1px;background:#e2e2e2;"></div>
<div class="r" style="left:1140px;top:403px;width:15px;height:15px;background:#fff;border:2px solid #0054a6;box-sizing:border-box;"></div>
<span class="t" style="right:48.5px;top:401.84px;font-size:12px;line-height:18px;color:#000;font-weight:400;">0</span>
<span class="t" style="left:961.5px;top:423.84px;font-size:12px;line-height:18px;color:#1057ad;font-weight:400;letter-spacing:-0.166px;word-spacing:0.166px;">For contract codes:</span>
<div class="r" style="left:961px;top:440px;width:194px;height:1px;background:#e2e2e2;"></div>
<div class="r" style="left:1140px;top:425px;width:15px;height:15px;background:#fff;border:2px solid #0054a6;box-sizing:border-box;"></div>
<span class="t" style="right:48.5px;top:423.84px;font-size:12px;line-height:18px;color:#000;font-weight:400;">0</span>
<span class="t" style="left:961.5px;top:445.84px;font-size:12px;line-height:18px;color:#1057ad;font-weight:400;letter-spacing:-0.324px;word-spacing:0.324px;">For e-shops:</span>
<div class="r" style="left:961px;top:462px;width:194px;height:1px;background:#e2e2e2;"></div>
<span class="t" style="right:32px;margin-right:-0.081px;top:445.84px;font-size:12px;line-height:18px;color:#1057ad;font-weight:400;letter-spacing:0.081px;word-spacing:-0.081px;">Not defined</span>
<span class="t" style="left:1081.8px;top:445.84px;font-size:12px;line-height:18px;color:#000;font-weight:400;">0</span>
<div class="r" style="left:954px;top:476px;width:208px;height:25px;background:#00adef;"></div>
<span class="t" style="left:958.5px;top:479.30px;font-size:13px;line-height:20px;color:#fff;font-weight:700;letter-spacing:-0.022px;word-spacing:0.022px;-webkit-text-stroke:0.3px #fff;">Other details</span>
<div class="r" style="left:1137px;top:478px;width:1px;height:21px;background:#1b9bd1;"></div>
<svg class="r" style="left:1140px;top:480px;" width="20" height="18" viewBox="0 0 20 18"><path d="M3 12L9.5 5.5L16 12" stroke="#fff" stroke-width="1.4" fill="none"/></svg>
<div class="r" style="left:954px;top:501px;width:208px;height:73px;background:#fdfdfd;"></div>
<span class="t" style="left:961.5px;top:505.84px;font-size:12px;line-height:18px;color:#1057ad;font-weight:400;letter-spacing:-0.429px;">Created:</span>
<span class="t" style="left:1035.3px;top:505.84px;font-size:12px;line-height:18px;color:#000;font-weight:400;letter-spacing:-0.944px;">K2</span>
<span class="t" style="left:1051px;top:505.84px;font-size:12px;line-height:18px;color:#1057ad;font-weight:400;letter-spacing:-0.469px;word-spacing:0.469px;">2017-09-20 08:07:00</span>
<div class="r" style="left:961px;top:522px;width:194px;height:1px;background:#e8e8e8;"></div>
<span class="t" style="left:961.5px;top:527.84px;font-size:12px;line-height:18px;color:#1057ad;font-weight:400;letter-spacing:-0.226px;word-spacing:0.226px;">Changed by:</span>
<span class="t" style="left:1035.3px;top:527.84px;font-size:12px;line-height:18px;color:#000;font-weight:400;letter-spacing:-0.944px;">K2</span>
<span class="t" style="left:1051px;top:527.84px;font-size:12px;line-height:18px;color:#1057ad;font-weight:400;letter-spacing:-0.469px;word-spacing:0.469px;">2019-03-15 14:35:31</span>
<div class="r" style="left:961px;top:544px;width:194px;height:1px;background:#e8e8e8;"></div>
<span class="t" style="left:961.5px;top:549.84px;font-size:12px;line-height:18px;color:#1057ad;font-weight:400;letter-spacing:-0.317px;">Recalculated:</span>
<span class="t" style="left:1035.3px;top:549.84px;font-size:12px;line-height:18px;color:#000;font-weight:400;letter-spacing:-0.944px;">K2</span>
<span class="t" style="left:1051px;top:549.84px;font-size:12px;line-height:18px;color:#1057ad;font-weight:400;letter-spacing:-0.469px;word-spacing:0.469px;">2017-09-20 10:07:49</span>
<div class="r" style="left:961px;top:566px;width:194px;height:1px;background:#e8e8e8;"></div>
<div class="r" style="left:954px;top:580px;width:208px;height:25px;background:#00adef;"></div>
<span class="t" style="left:958.5px;top:583.30px;font-size:13px;line-height:20px;color:#fff;font-weight:700;letter-spacing:-0.181px;word-spacing:0.181px;-webkit-text-stroke:0.3px #fff;">Superior price lists</span>
<div class="r" style="left:1137px;top:582px;width:1px;height:21px;background:#1b9bd1;"></div>
<svg class="r" style="left:1140px;top:584px;" width="20" height="18" viewBox="0 0 20 18"><path d="M3 12L9.5 5.5L16 12" stroke="#fff" stroke-width="1.4" fill="none"/></svg>
<div class="r" style="left:1113px;top:582px;width:1px;height:21px;background:#1b9bd1;"></div>
<svg class="r" style="left:1115px;top:584px;" width="22" height="18" viewBox="0 0 22 18"><path d="M1.2 3.5H20.2M1.2 9H20.2M1.2 14.5H20.2" stroke="#fff" stroke-width="1.3" fill="none"/></svg>
<div class="r" style="left:954px;top:605px;width:208px;height:22px;background:#f0f0f0;"></div>
<div class="r" style="left:977px;top:605px;width:173px;height:22px;background:#e1e1e1;"></div>
<div class="r" style="left:963px;top:615px;width:10px;height:1px;background:#d4d4d4;"></div>
<span class="t" style="left:981.3px;top:606.50px;font-size:13px;line-height:20px;color:#000;font-weight:400;letter-spacing:0.058px;word-spacing:-0.058px;">C1/2017/1 - Catalogue price</span>
<div class="r" style="left:954px;top:633px;width:208px;height:25px;background:#00adef;"></div>
<span class="t" style="left:958.5px;top:636.30px;font-size:13px;line-height:20px;color:#fff;font-weight:700;letter-spacing:-0.005px;word-spacing:0.005px;-webkit-text-stroke:0.3px #fff;">Inferior price lists</span>
<div class="r" style="left:1137px;top:635px;width:1px;height:21px;background:#1b9bd1;"></div>
<svg class="r" style="left:1140px;top:637px;" width="20" height="18" viewBox="0 0 20 18"><path d="M3 12L9.5 5.5L16 12" stroke="#fff" stroke-width="1.4" fill="none"/></svg>
<div class="r" style="left:1113px;top:635px;width:1px;height:21px;background:#1b9bd1;"></div>
<svg class="r" style="left:1115px;top:637px;" width="22" height="18" viewBox="0 0 22 18"><path d="M1.2 3.5H20.2M1.2 9H20.2M1.2 14.5H20.2" stroke="#fff" stroke-width="1.3" fill="none"/></svg>
<div class="r" style="left:954px;top:658px;width:208px;height:14px;background:#f0f0f0;overflow:hidden">
<div class="r" style="left:23px;top:1px;width:117px;height:22px;background:#e1e1e1"></div>
<div class="r" style="left:9px;top:11px;width:10px;height:1px;background:#d4d4d4"></div>
<span class="t" style="left:27.3px;top:-0.5px;font-size:13px;line-height:20px;letter-spacing:-0.1px">C1/2017/3 - Eshop</span>
</div>
<div class="r" style="left:1144px;top:658px;width:18px;height:14px;background:#f0f0f0;"></div>
<div class="r" style="left:1144px;top:658px;width:1px;height:14px;background:#fbfbfb;"></div>
<div class="r" style="left:1161px;top:658px;width:1px;height:14px;background:#dddddd;"></div>
<svg class="r" style="left:1143.5px;top:658px;" width="17" height="14" viewBox="0 0 17 14"><path d="M5 9.4L8.5 5.2L12 9.4" stroke="#505050" stroke-width="2.2" fill="none"/></svg>
<div class="r" style="left:1162px;top:79px;width:17px;height:593px;background:#f0f0f0;"></div>
<svg class="r" style="left:1162px;top:79px;" width="17" height="17" viewBox="0 0 17 17"><path d="M5 11.4L8.5 7.2L12 11.4" stroke="#505050" stroke-width="2.2" fill="none"/></svg>
<svg class="r" style="left:1162px;top:655px;" width="17" height="17" viewBox="0 0 17 17"><path d="M5 5.6L8.5 9.8L12 5.6" stroke="#505050" stroke-width="2.2" fill="none"/></svg>
<div class="r" style="left:1163px;top:96px;width:15px;height:552px;background:#cdcdcd;"></div>
<div class="r" style="left:954px;top:678px;width:225px;height:25px;background:#00adef;"></div>
<span class="t" style="left:958.5px;top:681.30px;font-size:13px;line-height:20px;color:#fff;font-weight:700;letter-spacing:-0.287px;-webkit-text-stroke:0.3px #fff;">Settings</span>
<div class="r" style="left:1154px;top:680px;width:1px;height:21px;background:#1b9bd1;"></div>
<svg class="r" style="left:1157px;top:682px;" width="20" height="18" viewBox="0 0 20 18"><path d="M3 12L9.5 5.5L16 12" stroke="#fff" stroke-width="1.4" fill="none"/></svg>
<div class="r" style="left:954px;top:703px;width:225px;height:51px;background:#fdfdfd;"></div>
<span class="t" style="left:968px;top:707.84px;font-size:12px;line-height:18px;color:#1057ad;font-weight:400;letter-spacing:-0.198px;">Period</span>
<div class="r" style="left:961px;top:724px;width:211px;height:23px;background:#ffffe1;border:1px solid #08a0ee;box-sizing:border-box;"></div>
<span class="t" style="left:964px;top:726.50px;font-size:13px;line-height:20px;color:#000;font-weight:400;letter-spacing:-0.355px;">2019</span>
<svg class="r" style="left:1152px;top:728px;" width="18" height="16" viewBox="0 0 18 16"><g fill="#0054a6"><rect x="2.8" y="3" width="3" height="2.8"/><rect x="7" y="3" width="3" height="2.8"/><rect x="11.2" y="3" width="3" height="2.8"/></g><g fill="#5b8fcf"><rect x="3.8" y="3.9" width="1" height="1"/><rect x="8" y="3.9" width="1" height="1"/><rect x="12.2" y="3.9" width="1" height="1"/></g><path d="M3.1 7.4L8.5 12.2L14 7.4" stroke="#0054a6" stroke-width="1.3" fill="none"/></svg>
</body></html>
